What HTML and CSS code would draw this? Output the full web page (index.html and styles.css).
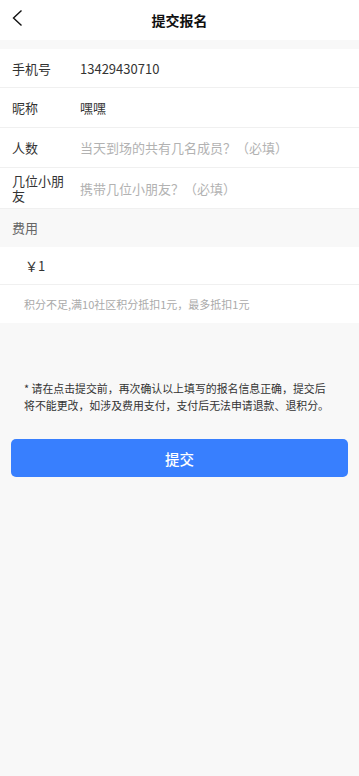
FILE: index.html
```html
<!DOCTYPE html>
<html lang="zh-CN">
<head>
  <meta charset="UTF-8" />
  <meta name="viewport" content="width=device-width, initial-scale=1" />
  <link rel="stylesheet" href="styles.css">
</head>
<body>
  <div class="page">
    <div class="nav-bar">
      <svg class="back-icon" width="24" height="24" viewBox="0 0 24 24">
        <polyline points="21.5,10.5 13.5,18 21.5,25.5" transform="translate(0,-6)" fill="none" stroke="#111" stroke-width="1.4" />
      </svg>
      <div class="nav-title">提交报名</div>
    </div>

    <div class="form-group">
      <div class="form-row">
        <div class="row-label">手机号</div>
        <div class="row-value">13429430710</div>
      </div>
      <div class="form-row">
        <div class="row-label">昵称</div>
        <div class="row-value">嘿嘿</div>
      </div>
      <div class="form-row">
        <div class="row-label">人数</div>
        <div class="row-value placeholder">当天到场的共有几名成员？（必填）</div>
      </div>
      <div class="form-row">
        <div class="row-label">几位小朋友</div>
        <div class="row-value placeholder">携带几位小朋友？（必填）</div>
      </div>
    </div>

    <div class="section-title">费用</div>
    <div class="fee-box">
      <div class="fee-amount">￥1</div>
      <div class="fee-hint">积分不足,满10社区积分抵扣1元，最多抵扣1元</div>
    </div>

    <div class="notice">* 请在点击提交前，再次确认以上填写的报名信息正确，提交后将不能更改，如涉及费用支付，支付后无法申请退款、退积分。</div>

    <button class="submit-btn">提交</button>
  </div>
</body>
</html>
```

FILE: styles.css
```css
html, body {
  margin: 0;
  padding: 0;
  background-color: #f8f8f8;
  font-family: "Noto Sans CJK SC", "Noto Sans", sans-serif;
  color: #333;
}
.page {
  width: 359px;
  min-height: 776px;
  background-color: #f8f8f8;
}
.nav-bar {
  height: 40px;
  background: #fff;
  position: relative;
  display: flex;
  align-items: center;
  justify-content: center;
}
.back-icon {
  position: absolute;
  left: 0;
  top: 6px;
}
.nav-title {
  font-size: 14px;
  font-weight: bold;
  color: #111;
}
.form-group {
  margin-top: 9px;
  background: #fff;
}
.form-row {
  display: flex;
  align-items: center;
  min-height: 40px;
  padding: 5px 12px;
  box-sizing: border-box;
  border-bottom: 1px solid #f0f0f0;
  font-size: 13px;
  line-height: 15px;
}
.form-row:first-child {
  min-height: 39px;
}
.form-row:last-child {
  min-height: 41px;
}
.row-label {
  width: 56px;
  margin-right: 12px;
  flex-shrink: 0;
  color: #333;
}
.row-value {
  color: #333;
}
.row-value.placeholder {
  color: #b2b2b2;
}
.section-title {
  height: 38px;
  line-height: 38px;
  padding-left: 12px;
  font-size: 13px;
  color: #666;
}
.fee-box {
  background: #fff;
}
.fee-amount {
  height: 37px;
  line-height: 37px;
  padding-left: 25px;
  font-size: 13px;
  color: #333;
  border-bottom: 1px solid #f0f0f0;
}
.fee-hint {
  height: 38px;
  line-height: 38px;
  padding-left: 24px;
  font-size: 11px;
  color: #aaa;
}
.notice {
  margin-top: 57px;
  padding: 0 27px 0 24px;
  font-size: 10.9px;
  line-height: 17px;
  color: #333;
}
.submit-btn {
  display: block;
  margin: 25px 11px 0 11px;
  width: 337px;
  height: 38px;
  border: none;
  border-radius: 5px;
  background-color: #387ffe;
  color: #fff;
  font-family: inherit;
  font-size: 14.5px;
  font-weight: 500;
}
```
